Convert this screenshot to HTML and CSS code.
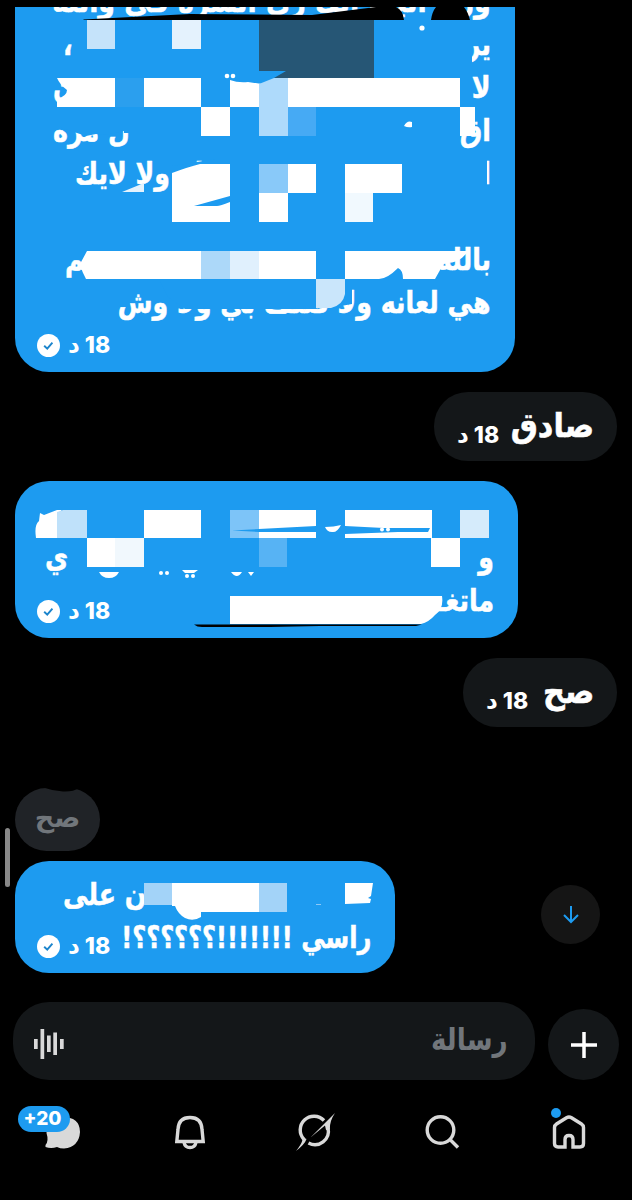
FILE: index.html
```html
<!DOCTYPE html>
<html lang="ar" dir="rtl">
<head>
<meta charset="utf-8">
<title>رسائل</title>
<link rel="stylesheet" href="styles.css">
</head>
<body>
<main class="chat">
  <section class="bubble sent long">
    <p class="line first"><span>وزن انيت انك زي السره في والله</span></p>
    <p class="line"><span>ير</span><span class="comma">،</span></p>
    <p class="line"><span>لا</span><span>ن</span></p>
    <p class="line"><span>اق</span><span>ل مره</span></p>
    <p class="line"><span>ا</span><span class="like">ـله ولا لايك</span></p>
    <p class="line"></p>
    <p class="line"><span>بالله</span><span class="meem">ـم</span></p>
    <p class="line"><span>هي لعانه ولا صنف بي ولا وش</span></p>
    <svg class="mask" viewBox="15 7 500 365" width="500" height="365">
      <g fill="#1d9bf0">
        <path d="M72 20H470V56H72zM72 56H472V78H72zM80 78H470V118H80zM50 112h78v18l-22 5-10-1-10 2-18-6-5-1-3-3H50zM124 112H472V133H124zM215 155H487V205H215zM230 162H483V200H230zM172 166l50-8v30h-50z"/>
        <path d="M483 156h4v30l-4-5zM160 281H330V305L316 309H213L204 309H185L168 297zM250 284H352V304L330 308H250zM97 250h100v30H97z"/>
      </g>
      <path fill="#000" d="M83 19.500L190 14 312 15 376 7h20q7 3 8 13H84zM431 20q1-8 5-13h28q4 5 6 13z"/>
      <path fill="#265675" d="M259 20H374V78H274L286 71H259z"/>
      <g fill="#fff">
        <path d="M57 78h58v29H57v-8q10-3 10-9-7-5-10-12zM144 78h57v29h-57zM230 80q8 3 18 2l14 2 15-6H460v29H230zM201 107h29v29h-29zM460 107h15v29h-15z"/>
        <path d="M172 173q16-6 28-9h30v58h-58zM288 164h28v29h-28zM345 164h57v29h-57zM259 193h29v29h-29z"/>
        <path d="M80 264l7-13H316v28H86q-4-7-6-15zM345 251H468q-8 13-24 12l-9 16H403q0-9-5-11-11 11-19 11H345z"/>
        <circle cx="227" cy="76" r="2.300"/><circle cx="233" cy="76" r="2.300"/>
        <circle cx="422" cy="28" r="2.600"/>
        <path d="M404 126q3-6 8-4v5q-4 1-8-1z"/>
      </g>
      <path fill="#c5e3fa" d="M87 20h28v29H87z"/>
      <path fill="#e4f2fd" d="M172 20h29v29h-29zM122 192l22-9v9z"/>
      <path fill="#2b9fee" d="M115 78h29v29h-29z"/>
      <path fill="#aedafb" d="M259 84l15-6h14v58h-29z"/>
      <path fill="#46aaf4" d="M288 107h28v29h-28z"/>
      <path fill="#89c9f9" d="M259 164h29v29h-29z"/>
      <path fill="#f1f9fe" d="M345 193h28v29h-28z"/>
      <path fill="#acd8f9" d="M201 251h29v28h-29z"/>
      <path fill="#e0f0fd" d="M230 251h29v28h-29z"/>
      <path fill="#cae6fb" d="M316 279h29v15q-2 11-14 14h-15z"/>
      <path fill="#1d9bf0" d="M194 206l36-10v6q-10 4-13 4z"/>
    </svg>
    <div class="meta"><span class="time">18 د</span><svg class="tick" viewBox="0 0 24 24"><circle cx="12" cy="12" r="12" fill="#fff"/><path d="M7.500 12.200l3.200 3.100 5.400-6.400" fill="none" stroke="#1d85cc" stroke-width="2"/></svg></div>
  </section>

  <section class="bubble received one"><p class="short">صادق</p><span class="time">18 د</span></section>

  <section class="bubble sent middle">
    <p class="line"></p>
    <p class="line"><span>و</span><span>ي</span></p>
    <p class="line"><span>ماتغـ</span></p>
    <svg class="mask" viewBox="15 481 503 157" width="503" height="157">
      <g fill="#fff">
        <path d="M36 538q-2-13 3-17l1-8 4 2 13-5h5l-4 3v25zM144 510h57v28h-57zM259 510h57v28h-57zM345 510h87v28h-87zM87 538h28v29H87zM431 538h29v29h-29z"/>
        <path d="M325 527q9 0 16-2-4 8-9 7-5 0-7-5z"/>
        <path d="M99 572h20q-3 6-10 6t-10-6zM182 570h16l-4 3h-9zM231 572h11q-5 8-11 0zM248 572h6l-3 4z"/>
        <circle cx="161" cy="573" r="2"/><circle cx="167" cy="573" r="2"/><circle cx="187" cy="576" r="2"/><circle cx="193" cy="576" r="2"/>
      </g>
      <path fill="#bfe1fa" d="M57 512q4-1 6-2h24v28H57z"/>
      <path fill="#f1f8fd" d="M115 538h29v29h-29z"/>
      <path fill="#7dc4f8" d="M230 510h29v28h-29z"/>
      <path fill="#57b3f4" d="M259 538h28v29h-28z"/>
      <path fill="#d5ebfb" d="M460 510h29v28h-29z"/>
      <path fill="#1d9bf0" d="M232 530.500L316 526v6H259zM345 526l39 2h46l-2 4h-30l-53 2z"/>
      <g fill="#fff"><circle cx="382" cy="529.500" r="2"/><circle cx="388" cy="529.500" r="2"/></g>
      <path fill="#000" d="M194 624.500H422l-6 1.500H320l-50 1H202q-5 0-8-2.500z"/>
      <path fill="#fff" d="M230 596H442q2 13-7 19-6 7-14 9H230z"/>
    </svg>
    <div class="meta"><span class="time">18 د</span><svg class="tick" viewBox="0 0 24 24"><circle cx="12" cy="12" r="12" fill="#fff"/><path d="M7.500 12.200l3.200 3.100 5.400-6.400" fill="none" stroke="#1d85cc" stroke-width="2"/></svg></div>
  </section>

  <section class="bubble received two"><p class="short">صح</p><span class="time">18 د</span></section>

  <section class="quoted"><p>صح</p><svg class="notch" viewBox="0 0 34 5"><path d="M0 0H34Q28 4 18 3.500T0 0z"/></svg></section>

  <section class="bubble sent last">
    <p class="line"><span class="ala">ن على</span></p>
    <p class="line"><span class="q">راسي !!!!!!!؟؟؟؟؟؟!</span></p>
    <svg class="mask" viewBox="15 861 380 112" width="380" height="112">
      <path fill="#fff" d="M172 883h87v29h-58v5q-8 5-16 1-7-4-10-12h-3zM345 883h28l-2 13-3 2 3 1-1 4-25 1z"/>
      <path fill="#a3d3f8" d="M144 883h28v22h-28zM259 883h28v29h-28z"/>
      <path fill="#8dc8f7" d="M316 904h5v1h-5z"/>
    </svg>
    <div class="meta"><span class="time">18 د</span><svg class="tick" viewBox="0 0 24 24"><circle cx="12" cy="12" r="12" fill="#fff"/><path d="M7.500 12.200l3.200 3.100 5.400-6.400" fill="none" stroke="#1d85cc" stroke-width="2"/></svg></div>
  </section>
  <i class="scrollbar"></i>
  <button class="down" aria-label="الأسفل"><svg width="16" height="20" viewBox="0 0 16 20"><path d="M8 1v16M1 10l7 7 7-7"/></svg></button>
</main>

<div class="compose">
  <button class="plus" aria-label="إضافة"><svg width="26" height="26" viewBox="0 0 26 26"><path d="M13 0v26M0 13h26"/></svg></button>
  <div class="field"><span>رسالة</span>
    <svg width="30" height="30" viewBox="0 0 30 30" fill="#d9d9d9"><path d="M0 10h3.700v10H0zM6.500 0h3.700v30H6.500zM13 6.500h3.700V23H13zM19.300 3.500h3.700V26h-3.700zM26 10h3.700v10H26z"/></svg>
  </div>
</div>

<nav class="tabs">
  <a class="tab"><svg width="36" height="36" viewBox="0 0 36 36"><path d="M3.500 13.500q0-2.200 2-3.500L15.500 3.800q2.500-1.600 5 0L30.500 10q2 1.300 2 3.500V29.500q0 3.500-3.500 3.500H22V25.500q0-4-4-4t-4 4V33H7Q3.500 33 3.500 29.500z"/></svg><i class="dot"></i></a>
  <a class="tab"><svg width="36" height="36" viewBox="0 0 36 36"><circle cx="16.500" cy="16" r="13.300"/><path d="M26 25.500l8 8"/></svg></a>
  <a class="tab"><svg width="42" height="40" viewBox="0 0 42 40"><path d="M29 8.500A13.500 13.500 0 0 0 9 27.500M13.500 31A13.500 13.500 0 0 0 33 16"/><path class="solid" d="M7.500 25L11.500 27Q10 32 1 39 6 33 7.500 28zM15.500 25.500L40 1Q34.500 9 34.800 17.500L31 18 30 13.500z"/></svg></a>
  <a class="tab"><svg width="34" height="36" viewBox="0 0 34 36"><path d="M5 15.500Q5.500 3.500 17 3.500t12 12L30.200 27.500H3.800zM11 28.500q1 5 6 5t6-5"/></svg></a>
  <a class="tab messages"><svg width="38" height="34" viewBox="0 0 38 34"><path class="solid" d="M1.500 30q3.500-4 1-12Q3 3 18 2 36 2 36 17 35 32 20 33.500q-4 0-7-1.500-6 2-11.500 0z"/></svg><b class="badge" dir="ltr">+20</b></a>
</nav>
</body>
</html>
```
FILE: styles.css
```css
* { box-sizing: border-box; }
body {
  margin: 0;
  width: 632px;
  height: 1200px;
  overflow: hidden;
  background: #000;
  color: #fff;
  font-family: "DejaVu Sans", sans-serif;
  font-weight: 700;
  display: flex;
  flex-direction: column;
}
p { margin: 0; }
button { border: 0; padding: 0; display: grid; place-items: center; }
.chat {
  position: relative;
  height: 1002px;
  padding: 7px 15px 0;
  display: flex;
  flex-direction: column;
  align-items: flex-end;
}
.bubble { position: relative; flex: none; overflow: hidden; border-radius: 34px; }
.sent { background: #1d9bf0; }
.long { width: 500px; height: 365px; padding: 0 24px; border-radius: 0 0 34px 34px; }
.line {
  display: flex;
  justify-content: space-between;
  height: 43px;
  line-height: 43px;
  font-size: 29px;
  white-space: nowrap;
  -webkit-text-stroke: .5px currentColor;
}
.line span { transform: scale(.87, 1.06); transform-origin: right 30px; }
.line span:last-child:not(:first-child) { transform-origin: left 30px; }
.long .line { padding-left: 14px; }
.long .first { margin-top: -26px; }
.long .first span { transform: scale(.92, 1.06); }
.comma { margin-left: 10px; }
.like { margin-left: 22px; }
.meem { margin-left: 12px; }
.mask { position: absolute; left: 0; top: 0; }
.meta {
  position: absolute;
  left: 22px;
  bottom: 15px;
  display: flex;
  align-items: center;
  gap: 8px;
}
.tick { width: 23px; height: 23px; }
.time { font: 800 23px/24px Inter, "DejaVu Sans", sans-serif; white-space: nowrap; }
.received {
  align-self: flex-start;
  height: 69px;
  padding: 0 23px;
  display: flex;
  align-items: center;
  justify-content: space-between;
  background: #141719;
}
.one { width: 183px; margin-top: 20px; }
.two { width: 154px; margin-top: 20px; }
.received .time { margin-top: 17px; }
.short {
  margin-bottom: 3px;
  font-size: 31px;
  line-height: 56px;
  transform: scale(.98, 1.08);
  transform-origin: right center;
  -webkit-text-stroke: .5px currentColor;
}
.middle { width: 503px; height: 157px; margin-top: 20px; padding: 13px 24px 0 30px; }
.quoted {
  position: relative;
  width: 85px;
  height: 63px;
  margin-top: 61px;
  border-radius: 32px;
  background: #202327;
  color: #71767b;
  font-size: 27px;
  line-height: 59px;
  text-align: center;
}
.notch { position: absolute; left: 30px; top: 0; width: 34px; height: 5px; }
.last { width: 380px; height: 112px; margin-top: 10px; padding: 13px 24px 0; }
.last .line:first-of-type { justify-content: flex-end; padding-left: 24px; }
.line .ala { transform-origin: left 30px; }
.line .q { transform: scale(.83, 1.06); }
.scrollbar { position: absolute; left: 5px; top: 828px; width: 5px; height: 59px; border-radius: 3px; background: #888; }
.down { position: absolute; left: 541px; top: 885px; width: 59px; height: 59px; border-radius: 50%; background: #151515; }
.down svg { fill: none; stroke: #1d9bf0; stroke-width: 2; }
.compose { display: flex; align-items: flex-end; gap: 13px; height: 78px; padding: 0 13px; }
.plus { width: 71px; height: 71px; border-radius: 50%; background: #141719; }
.plus svg { stroke: #fff; stroke-width: 3.500px; }
.field {
  flex: 1;
  height: 78px;
  padding: 6px 27px 0 21px;
  border-radius: 36px;
  background: #141719;
  color: #71767b;
  font-size: 28px;
  display: flex;
  align-items: center;
  justify-content: space-between;
}
.field span { margin-bottom: 10px; transform: scale(.94, 1.1); transform-origin: right center; }
.tabs { height: 106px; display: flex; padding-bottom: 3px; }
.tab { position: relative; flex: 1; display: grid; place-items: center; }
.tab svg { fill: none; stroke: #d9d9d9; stroke-width: 3.400px; }
.tab .solid { fill: #d9d9d9; stroke: none; }
.dot { position: absolute; left: 45px; top: 28px; width: 10px; height: 10px; border-radius: 50%; background: #1d9bf0; }
.badge {
  position: absolute;
  left: 18px;
  top: 26px;
  width: 52px;
  height: 26px;
  padding-right: 3px;
  border-radius: 13px;
  background: #1d9bf0;
  font: 800 19px/26px Inter, sans-serif;
  text-align: center;
}
```
